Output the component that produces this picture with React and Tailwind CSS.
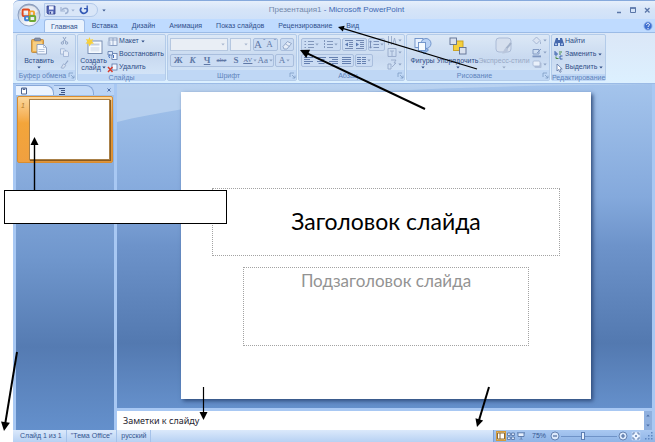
const TABS = ['Главная', 'Вставка', 'Дизайн', 'Анимация', 'Показ слайдов', 'Рецензирование', 'Вид'];

const Caret = ({ className = '' }) => (
  <svg viewBox="0 0 4 3" className={`w-1 h-[3px] shrink-0 ${className}`} fill="currentColor">
    <path d="M0.3 0.5h3.4L2 2.6z" />
  </svg>
);

const Launcher = () => (
  <svg viewBox="0 0 7 7" className="size-[7px]" fill="none" stroke="#7f9cc4" strokeWidth="0.8">
    <path d="M1 5V1h4M3 3l3 3M6 3.6V6H3.6" />
  </svg>
);

const OfficeLogo = () => (
  <svg viewBox="0 0 24 24" className="size-6">
    <defs>
      <radialGradient id="orb" cx="0.5" cy="0.85" r="0.9">
        <stop offset="0" stopColor="#ffffff" />
        <stop offset="0.55" stopColor="#d3dbe8" />
        <stop offset="1" stopColor="#8c9cb8" />
      </radialGradient>
    </defs>
    <circle cx="12" cy="12" r="11" fill="url(#orb)" stroke="#7d93b8" strokeWidth="0.8" />
    <path d="M3 9a9.5 9.5 0 0 1 18 0c-5 2-13 2-18 0z" fill="#fff" opacity="0.65" />
    <g fill="none" strokeWidth="1.9">
      <rect x="5.6" y="6.500" width="6.6" height="6.6" rx="1" stroke="#e2491d" />
      <rect x="12.6" y="8.400" width="4.4" height="4.4" rx="0.8" stroke="#f2a32c" />
      <rect x="8" y="13.600" width="4" height="3.6" rx="0.8" stroke="#3f7fd6" />
      <rect x="12.6" y="13" width="5.6" height="5" rx="0.8" stroke="#6eaa35" />
    </g>
  </svg>
);

const SaveIcon = () => (
  <svg viewBox="0 0 10 10" className="size-[10px]">
    <path d="M1 1h8v8H2L1 8z" fill="#5568b8" stroke="#33418c" strokeWidth="0.8" />
    <rect x="3" y="1.2" width="4.6" height="3.4" fill="#f3f6ff" />
    <rect x="3.2" y="6.2" width="4" height="2.6" fill="#c9d3f0" />
    <rect x="3.8" y="6.8" width="1.2" height="2" fill="#33418c" />
  </svg>
);

const UndoIcon = () => (
  <svg viewBox="0 0 10 10" className="size-[10px]" fill="none" stroke="#9fb2d2" strokeWidth="1.5">
    <path d="M2 5c2-3 6-2 6 .6C8 7.600 6.500 8.500 5 8.500" />
    <path d="M1 2v4h4" strokeWidth="1.2" />
  </svg>
);

const RedoIcon = () => (
  <svg viewBox="0 0 10 10" className="size-[10px]" fill="none" stroke="#3359b5" strokeWidth="1.7">
    <path d="M2.600 2.600a3.300 3.300 0 1 0 5 .6" />
    <path d="M5 3.600h3.200V.6" strokeWidth="1.300" />
  </svg>
);

const PasteIcon = () => (
  <svg viewBox="0 0 18 18" className="size-[18px]">
    <rect x="1.500" y="2.500" width="12" height="13" rx="1" fill="#edb04e" stroke="#b98232" strokeWidth="0.8" />
    <rect x="4.500" y="1" width="6" height="3" rx="1" fill="#8792a8" stroke="#5f6a80" strokeWidth="0.6" />
    <rect x="3" y="4.500" width="9" height="9.500" fill="#f6ce83" />
    <path d="M7 7.500h6.500l3 3v6.500H7z" fill="#f5f9ff" stroke="#7a8fb5" strokeWidth="0.8" />
    <path d="M13.500 7.500v3h3M8.500 12.500h6M8.500 14.500h6" fill="none" stroke="#9aadcc" strokeWidth="0.7" />
  </svg>
);

const CutIcon = () => (
  <svg viewBox="0 0 9 9" className="size-[9px]" fill="none" stroke="#8fa3c4" strokeWidth="1">
    <path d="M3 1l3 5M6 1L3 6" />
    <circle cx="2.400" cy="7" r="1.200" />
    <circle cx="6.600" cy="7" r="1.200" />
  </svg>
);

const CopyIcon = () => (
  <svg viewBox="0 0 9 9" className="size-[9px]" fill="#e3ebf8" stroke="#9bafd0" strokeWidth="0.8">
    <path d="M.5.8h3.700l1.300 1.300v4h-5z" />
    <path d="M3.500 3h3.700l1.300 1.300v4.200h-5z" />
  </svg>
);

const BrushIcon = () => (
  <svg viewBox="0 0 9 9" className="size-[9px]" fill="none" stroke="#93a7c9" strokeWidth="1.100">
    <path d="M8 .6L5 4.500" />
    <path d="M3.500 3.800l2.300 1.600L3.500 8.300 1 7.800z" fill="#d6e0f0" strokeWidth="0.8" />
  </svg>
);

const NewSlideIcon = () => (
  <svg viewBox="0 0 18 18" className="size-[18px]">
    <rect x="3" y="4" width="14" height="12.500" fill="#f7fbff" stroke="#6f86ad" strokeWidth="0.9" />
    <rect x="5.500" y="6.500" width="9" height="2" fill="#c5cfdf" />
    <rect x="5.500" y="10" width="9" height="4.500" fill="#dfe7f2" />
    <path d="M4.500 0l1 2.800L8.300 2 7 4.500l2 2-2.800.2L4.500 9.500 3.400 6.800.5 6.500l1.800-2L.8 2l2.700.6z" fill="#f7d03c" />
  </svg>
);

const LayoutIcon = () => (
  <svg viewBox="0 0 11 10" className="w-[11px] h-[10px]">
    <rect x="2" y="1" width="8" height="7.500" fill="#edf3fc" stroke="#7890b8" strokeWidth="0.8" />
    <path d="M6 1v7.500M2 3h8" stroke="#7890b8" strokeWidth="0.7" />
    <rect x="0.500" y="4.500" width="3" height="4" fill="#b4c4de" />
  </svg>
);

const ResetIcon = () => (
  <svg viewBox="0 0 11 10" className="w-[11px] h-[10px]">
    <rect x="5" y="3.500" width="5" height="6" fill="#f2f7ff" stroke="#5a76a8" strokeWidth="0.8" />
    <path d="M1 1.500h4.500v3.500H1z" fill="#dbe7fa" stroke="#5a76a8" strokeWidth="0.8" />
    <path d="M3 8c-1.500-1-1.500-2.500 0-3.500M6.500 5v3" fill="none" stroke="#2f5eb5" strokeWidth="0.9" />
  </svg>
);

const DeleteIcon = () => (
  <svg viewBox="0 0 11 10" className="w-[11px] h-[10px]">
    <rect x="5" y="1" width="5" height="6" fill="#f2f7ff" stroke="#5a76a8" strokeWidth="0.8" />
    <path d="M1 4l4.500 5M5.500 4L1 9" stroke="#d93a2b" strokeWidth="1.500" />
  </svg>
);

const ShapesIcon = () => (
  <svg viewBox="0 0 18 18" className="size-[18px]" stroke="#6a8fc7" strokeWidth="0.9">
    <rect x="1" y="1.500" width="8" height="9" fill="#e9f2ff" />
    <circle cx="12" cy="6.500" r="5" fill="#b9d2f5" />
    <path d="M10 9.500l4.500 3.500-4.500 4-4-4z" fill="#8fb5ea" />
    <rect x="4.500" y="5.500" width="7" height="8" fill="#f5faff" />
  </svg>
);

const ArrangeIcon = () => (
  <svg viewBox="0 0 18 18" className="size-[18px]" strokeWidth="0.9">
    <rect x="4.500" y="4" width="9.500" height="9.500" fill="#f4cf3d" stroke="#c99e1c" />
    <rect x="1" y="1" width="6.500" height="6.500" fill="#d9e1ee" stroke="#5d6f92" />
    <rect x="10.500" y="10.500" width="6.500" height="6.500" fill="#d9e1ee" stroke="#5d6f92" />
  </svg>
);

const StylesIcon = () => (
  <svg viewBox="0 0 18 18" className="size-[18px]">
    <rect x="1" y="1" width="15" height="14" rx="3" fill="#d5dfee" stroke="#abbbd6" />
    <path d="M16 6l-5 6" stroke="#a3b2ca" strokeWidth="2" />
    <path d="M12 11c-3 0-3 3-5 5.500 3 .5 6-1 6-4z" fill="#b9c6dc" />
  </svg>
);

const FillIcon = () => (
  <svg viewBox="0 0 10 10" className="size-[10px]" fill="#dbe4f2" stroke="#9fb1cf" strokeWidth="0.9">
    <path d="M4.500 1L8 4.500 4.500 8 1 4.500z" />
    <path d="M8.500 5.500v2.500" />
  </svg>
);

const OutlineIcon = () => (
  <svg viewBox="0 0 10 10" className="size-[10px]" fill="none" stroke="#7d95c0">
    <path d="M1 1.500h6V6H1zM9 1L5 5" strokeWidth="0.9" />
    <rect x="0.500" y="7.500" width="8.500" height="1.800" fill="#7d95c0" stroke="none" />
  </svg>
);

const EffectsIcon = () => (
  <svg viewBox="0 0 10 10" className="size-[10px]">
    <rect x="2.500" y="3.500" width="7" height="5.500" rx="1" fill="#afbfda" />
    <rect x="1" y="2" width="7" height="5" rx="1" fill="#e9f0fa" stroke="#a5b6d3" strokeWidth="0.8" />
  </svg>
);

const FindIcon = () => (
  <svg viewBox="0 0 10 10" className="size-[10px]" fill="#4568ad">
    <path d="M2 1h2v2h2V1h2l2 6v2H6V6H4v3H0V7z" />
    <circle cx="2" cy="7.300" r="1" fill="#b9cff2" />
    <circle cx="8" cy="7.300" r="1" fill="#b9cff2" />
  </svg>
);

const ReplaceIcon = () => (
  <svg viewBox="0 0 10 10" className="size-[10px]" fill="none" strokeWidth="1">
    <path d="M1 1v4M1 3h2v2H1" stroke="#3d63ad" />
    <path d="M5 2h3M5 4h2M2 6.500v2h2.500" stroke="#4d8f4a" />
    <path d="M8.500 6H6v3h2.500" stroke="#3d63ad" />
  </svg>
);

const SelectIcon = () => (
  <svg viewBox="0 0 10 10" className="size-[10px]">
    <path d="M3 1v7l1.700-1.500L6 9.300l1.200-.6L6 6h2.200z" fill="#fff" stroke="#5c74a3" strokeWidth="0.8" />
  </svg>
);

const EraserIcon = () => (
  <svg viewBox="0 0 11 10" className="w-[11px] h-[10px]">
    <path d="M1 6.500l4.500-5 4 2-4.500 5.500H2z" fill="#e6edf8" stroke="#8ba0c4" strokeWidth="0.9" />
    <path d="M3.500 4l4 2.500" stroke="#8ba0c4" strokeWidth="0.8" />
  </svg>
);

const ListIcon = ({ numbered }) => (
  <svg viewBox="0 0 10 9" className="w-[10px] h-[9px]" stroke="#8297bb">
    <path d="M4 1.500h6M4 4.500h6M4 7.500h6" />
    <path d={numbered ? 'M1.500 0v9' : 'M.5 1.500h1.500M.5 4.500h1.500M.5 7.500h1.500'} strokeDasharray={numbered ? '2 1' : undefined} />
  </svg>
);

const IndentIcon = ({ flip }) => (
  <svg viewBox="0 0 10 9" className="w-[10px] h-[9px]" stroke="#7389b2" fill="#5c7ab2">
    <path d="M1 .5h8M5 2.500h4M5 4.500h4M5 6.500h4M1 8.500h8" />
    <path d={flip ? 'M4 4.500l-3-2v4z' : 'M1 4.500l3-2v4z'} stroke="none" />
  </svg>
);

const ALIGN_PATHS = {
  left: 'M0 .5h9M0 2.500h6M0 4.500h9M0 6.500h6',
  center: 'M0 .5h9M1.500 2.500h6M0 4.500h9M1.500 6.500h6',
  right: 'M0 .5h9M3 2.500h6M0 4.500h9M3 6.500h6',
  justify: 'M0 .5h9M0 2.500h9M0 4.500h9M0 6.500h9',
  columns: 'M0 .5h4M5 .5h4M0 2.500h4M5 2.500h4M0 4.500h4M5 4.500h4M0 6.500h4M5 6.500h4',
};

const AlignIcon = ({ kind }) => (
  <svg viewBox="0 0 9 8" className="w-[9px] h-2" stroke="#6580b0">
    <path d={ALIGN_PATHS[kind]} />
  </svg>
);

const SpacingIcon = () => (
  <svg viewBox="0 0 10 9" className="w-[10px] h-[9px]" stroke="#7389b2" fill="none">
    <path d="M4.500 1.500H10M4.500 4.500H10M4.500 7.500H10M1.500 1v7M.3 2.300L1.500.8l1.200 1.500M.3 6.700l1.200 1.500 1.200-1.500" strokeWidth="0.9" />
  </svg>
);

const TextDirIcon = ({ kind }) => (
  <svg viewBox="0 0 10 11" className="w-[10px] h-[11px]" stroke="#96a9c9" strokeWidth="0.9" fill="none">
    {kind === 'dir' && <path d="M1.500 1v9M4.500 1v9M6 9l1.500-6L9 9" />}
    {kind === 'box' && <path d="M1 1.500h8v8H1zM3 4h4M5 4v5" />}
    {kind === 'art' && <path d="M1 5h3v5H1zM4 1h5l-2 3h2L5 8" />}
  </svg>
);

const Strip = ({ children, className = '' }) => (
  <div className={`flex items-center h-[13px] border border-[#a9bedd] rounded-[2px] bg-[#cbdcf3] text-[#5f78a6] ${className}`}>
    {children}
  </div>
);

const Group = ({ title, launcher, className, children }) => (
  <section className={`flex flex-col shrink-0 rounded-[2px] border border-[#b3cbe9] bg-linear-to-b from-[#dce8f6] via-[#c9daf0] to-[#d6e7fa] ${className}`}>
    <div className="flex-1 flex">{children}</div>
    <div className="h-[10px] flex items-center bg-[#bfd7f5] text-[#5d82bb] leading-none">
      <span className="flex-1 text-center whitespace-nowrap">{title}</span>
      {launcher && <button type="button" aria-label={title}><Launcher /></button>}
    </div>
  </section>
);

const BigButton = ({ icon, label, className = '', disabled }) => (
  <button
    type="button"
    disabled={disabled}
    className={`flex flex-col items-center pt-[2px] leading-[8px] whitespace-nowrap ${disabled ? 'text-[#98a9c5]' : 'text-[#2e4c86]'} ${className}`}
  >
    {icon}
    <span className="pt-[2px]">{label}</span>
    <Caret className="mt-px" />
  </button>
);

const RowButton = ({ icon, label, caret }) => (
  <button type="button" className="flex items-center gap-px h-[13px] whitespace-nowrap text-[#2e4c86]">
    {icon}
    {label}
    {caret && <Caret className="ml-px" />}
  </button>
);

const IconButton = ({ label, children, caret, className = '' }) => (
  <button type="button" aria-label={label} className={`flex-1 flex items-center justify-center gap-px leading-none ${className}`}>
    {children}
    {caret && <Caret className="text-[#8da1c3]" />}
  </button>
);

const TitleBar = () => (
  <header className="relative h-[19px] shrink-0 flex items-center bg-linear-to-b from-[#e6effb] via-[#d5e4f8] to-[#cfe1f9] rounded-tl-md border-t border-[#86a9dc]">
    <div className="ml-[31px] h-[14px] flex items-center gap-1 pl-px pr-2 rounded-r-full border border-[#b2c9ea] bg-[#d9e6f8]">
      <button type="button" aria-label="Сохранить"><SaveIcon /></button>
      <button type="button" aria-label="Отменить" className="flex items-center gap-px text-[#9fb2d2]"><UndoIcon /><Caret /></button>
      <button type="button" aria-label="Повторить"><RedoIcon /></button>
    </div>
    <button type="button" aria-label="Настройка панели" className="ml-1 text-[#3d5a91]"><Caret /></button>
    <h1 className="flex-1 text-center text-[8px] whitespace-nowrap text-[#3f69b3]">
      <span className="text-[#7489ab]">Презентация1</span> - Microsoft PowerPoint
    </h1>
    <div className="flex gap-[6px] mr-1 ml-12 text-[#5a76a8]">
      <button type="button" aria-label="Свернуть">
        <svg viewBox="0 0 8 8" className="size-2" stroke="currentColor"><path d="M2 6.500h4" strokeWidth="1.500" /></svg>
      </button>
      <button type="button" aria-label="Развернуть">
        <svg viewBox="0 0 8 8" className="size-2" stroke="currentColor" fill="none"><path d="M1.500 2h5v4.500h-5z" /><path d="M1 2h6" strokeWidth="1.500" /></svg>
      </button>
      <button type="button" aria-label="Закрыть">
        <svg viewBox="0 0 8 8" className="size-2" stroke="currentColor"><path d="M2 2l4.500 4.500M6.500 2L2 6.500" strokeWidth="1.300" /></svg>
      </button>
    </div>
    <button type="button" aria-label="Office" className="absolute left-1 top-[2px] z-10"><OfficeLogo /></button>
  </header>
);

const TabBar = () => (
  <nav className="h-[13px] shrink-0 flex items-stretch pl-[31px] pr-[2px] bg-[#bfdbff] text-[#2f4f8c]">
    {TABS.map((tab, i) => (
      <button
        key={tab}
        type="button"
        className={`px-[6px] leading-[13px] whitespace-nowrap rounded-t-[3px] ${i === 0 ? 'bg-[#e9f2fd] border-x border-t border-[#9dbce8]' : 'border-x border-transparent'}`}
      >
        {tab}
      </button>
    ))}
    <button type="button" aria-label="Справка" className="ml-auto">
      <svg viewBox="0 0 10 10" className="size-[10px]">
        <circle cx="5" cy="5" r="4.200" fill="#3e6fd0" stroke="#a8c4f0" />
        <path d="M3.500 3.800C3.500 2 6.600 2.200 6.500 3.800 6.400 4.800 5 4.800 5 6M5 7v1" stroke="#fff" fill="none" />
      </svg>
    </button>
  </nav>
);

const Ribbon = () => (
  <div className="h-[52px] shrink-0 flex gap-px p-px pl-[3px] pb-[2px] bg-linear-to-b from-[#dbe7f7] to-[#dcf0ff] border-y border-[#9bbbe6]">
    <Group title="Буфер обмена" launcher className="w-[60px]">
      <BigButton icon={<PasteIcon />} label="Вставить" className="w-9 ml-1" />
      <div className="flex flex-col justify-around pl-[3px]">
        <button type="button" aria-label="Вырезать"><CutIcon /></button>
        <button type="button" aria-label="Копировать"><CopyIcon /></button>
        <button type="button" aria-label="Формат по образцу"><BrushIcon /></button>
      </div>
    </Group>

    <Group title="Слайды" className="w-[89px]">
      <button type="button" className="w-[27px] ml-[2px] pt-[2px] flex flex-col items-center leading-[7px] whitespace-nowrap text-[#2e4c86]">
        <NewSlideIcon />
        <span className="pt-[2px]">Создать</span>
        <span className="flex items-center gap-px">слайд<Caret /></span>
      </button>
      <div className="flex flex-col justify-center">
        <RowButton icon={<LayoutIcon />} label="Макет" caret />
        <RowButton icon={<ResetIcon />} label="Восстановить" />
        <RowButton icon={<DeleteIcon />} label="Удалить" />
      </div>
    </Group>

    <Group title="Шрифт" launcher className="w-[130px]">
      <div className="flex-1 flex flex-col justify-evenly px-[2px]">
        <div className="flex gap-[2px]">
          <div className="relative w-[58px] text-[#a9b8d0]">
            <select aria-label="Шрифт" className="block appearance-none w-full h-[13px] bg-[#e9eef5] border border-[#b5c7e0]" />
            <Caret className="absolute right-[3px] top-[5px] pointer-events-none" />
          </div>
          <div className="relative w-[21px] text-[#a9b8d0]">
            <select aria-label="Размер шрифта" className="block appearance-none w-full h-[13px] bg-[#e9eef5] border border-[#b5c7e0]" />
            <Caret className="absolute right-[3px] top-[5px] pointer-events-none" />
          </div>
          <Strip className="w-[25px] font-['Liberation_Serif',serif]">
            <IconButton label="Увеличить размер" className="text-[11px]">A<sup className="text-[7px]">ˆ</sup></IconButton>
            <IconButton label="Уменьшить размер" className="text-[9px]">A<sup className="text-[7px]">ˇ</sup></IconButton>
          </Strip>
          <Strip className="flex-1"><IconButton label="Очистить формат"><EraserIcon /></IconButton></Strip>
        </div>
        <div className="flex gap-px font-['Liberation_Serif',serif]">
          <Strip className="w-[104px] text-[9px]">
            <IconButton label="Полужирный" className="font-bold">Ж</IconButton>
            <IconButton label="Курсив" className="font-bold italic">К</IconButton>
            <IconButton label="Подчеркнутый" className="font-bold underline">Ч</IconButton>
            <IconButton label="Зачеркнутый" className="line-through text-[7px]">abe</IconButton>
            <IconButton label="Тень" className="font-bold">S</IconButton>
            <IconButton label="Интервал" caret className="text-[7px] underline">AV</IconButton>
            <IconButton label="Регистр" caret>Aa</IconButton>
          </Strip>
          <Strip className="flex-1 text-[9px]"><IconButton label="Цвет текста" caret>A</IconButton></Strip>
        </div>
      </div>
    </Group>

    <Group title="Абзац" launcher className="w-[107px]">
      <div className="flex flex-col justify-evenly pl-[2px] w-[86px]">
        <div className="flex gap-px">
          <Strip className="w-10">
            <IconButton label="Маркеры" caret><ListIcon /></IconButton>
            <IconButton label="Нумерация" caret><ListIcon numbered /></IconButton>
          </Strip>
          <Strip className="w-[25px]">
            <IconButton label="Уменьшить отступ"><IndentIcon /></IconButton>
            <IconButton label="Увеличить отступ"><IndentIcon flip /></IconButton>
          </Strip>
          <Strip className="flex-1"><IconButton label="Междустрочный интервал" caret><SpacingIcon /></IconButton></Strip>
        </div>
        <div className="flex gap-px">
          <Strip className="w-[53px]">
            <IconButton label="По левому краю"><AlignIcon kind="left" /></IconButton>
            <IconButton label="По центру"><AlignIcon kind="center" /></IconButton>
            <IconButton label="По правому краю"><AlignIcon kind="right" /></IconButton>
            <IconButton label="По ширине"><AlignIcon kind="justify" /></IconButton>
          </Strip>
          <Strip className="w-[18px]"><IconButton label="Колонки" caret><AlignIcon kind="columns" /></IconButton></Strip>
        </div>
      </div>
      <div className="flex-1 flex flex-col justify-around">
        <IconButton label="Направление текста" caret><TextDirIcon kind="dir" /></IconButton>
        <IconButton label="Выровнять текст" caret><TextDirIcon kind="box" /></IconButton>
        <IconButton label="SmartArt" caret><TextDirIcon kind="art" /></IconButton>
      </div>
    </Group>

    <Group title="Рисование" launcher className="w-[144px]">
      <BigButton icon={<ShapesIcon />} label="Фигуры" className="w-[27px] ml-[2px]" />
      <BigButton icon={<ArrangeIcon />} label="Упорядочить" className="w-[43px]" />
      <BigButton icon={<StylesIcon />} label="Экспресс-стили" className="w-[50px]" disabled />
      <div className="flex-1 flex flex-col justify-around">
        <IconButton label="Заливка" caret><FillIcon /></IconButton>
        <IconButton label="Контур" caret><OutlineIcon /></IconButton>
        <IconButton label="Эффекты" caret><EffectsIcon /></IconButton>
      </div>
    </Group>

    <Group title="Редактирование" className="w-[55px]">
      <div className="flex flex-col justify-center pl-[2px]">
        <RowButton icon={<FindIcon />} label="Найти" />
        <RowButton icon={<ReplaceIcon />} label="Заменить" caret />
        <RowButton icon={<SelectIcon />} label="Выделить" caret />
      </div>
    </Group>
  </div>
);

const SlidesPane = () => (
  <aside className="w-[98px] shrink-0 flex flex-col bg-[linear-gradient(#a2c2ea,#84a8da_30%,#7097cd_50%,#557bb2_76%,#6490cc)]">
    <div className="h-[11px] shrink-0 flex items-end bg-[#b9d3f5]">
      <button type="button" aria-label="Слайды" className="w-[38px] h-[10px] pl-1 bg-[#eaf3ff] rounded-tr-lg border-t border-r border-[#88a8d8]">
        <svg viewBox="0 0 8 8" className="size-2" fill="#fff" stroke="#4d6491"><path d="M1.500 1h5v6h-5zM3 1v1.500h2V1" /></svg>
      </button>
      <button type="button" aria-label="Структура" className="w-10 h-[10px] pl-1 bg-[#c3daf7] rounded-tr-lg border-t border-r border-[#88a8d8]">
        <svg viewBox="0 0 8 8" className="size-2" stroke="#3c5587"><path d="M1 1.500h6M3 3.500h4M3 5.500h4M1 7.500h6" /></svg>
      </button>
      <button type="button" aria-label="Закрыть область" className="ml-auto mr-[2px] self-center">
        <svg viewBox="0 0 6 6" className="size-[6px]" stroke="#4d6ea8"><path d="M1.500 1.500l3 3M4.500 1.500l-3 3" /></svg>
      </button>
    </div>
    <div className="mt-px mx-px flex h-[67px] p-[2px] border border-[#d98d2f] rounded-[2px] bg-linear-to-b from-[#fbd79b] via-[#f3a53a] via-40% to-[#f0a040]">
      <span className="w-[9px] pl-px text-[7px] leading-[14px] italic text-[#b27a2c]">1</span>
      <div className="flex-1 bg-white border border-[#a98048] shadow-[1px_1px_1px_#8a5a1e]" />
    </div>
  </aside>
);

const Slide = () => (
  <article className="w-[77%] aspect-[4/3] mt-2 bg-white flex flex-col items-center shadow-[2px_2px_4px_#2f4c7c]">
    <div className="w-[85%] h-[22%] mt-24 border border-dotted border-[#a3a3a3] flex items-center justify-center">
      <h2 className="font-['Lato','Noto_Sans',sans-serif] text-[23px] leading-none text-black whitespace-nowrap">Заголовок слайда</h2>
    </div>
    <div className="w-[70%] h-[26%] mt-[11px] border border-dotted border-[#a3a3a3] text-center">
      <p className="font-['Lato','Noto_Sans',sans-serif] text-[17px] leading-[26px] text-[#939393] whitespace-nowrap">Подзаголовок слайда</p>
    </div>
  </article>
);

const Workspace = () => (
  <div className="flex-1 min-h-0 flex gap-[3px] px-[3px] bg-[#a8c8f3]">
    <SlidesPane />
    <main className="flex-1 min-w-0 flex flex-col gap-[3px]">
      <div className="relative flex-1 min-h-0 overflow-hidden bg-[linear-gradient(#a4c4ec,#84a9dc_35%,#6d93ca_50%,#5379b0_80%,#6590cb)]">
        <svg viewBox="0 0 534 40" preserveAspectRatio="none" className="absolute inset-x-0 top-0 w-full h-10" fill="#c2d8f2" opacity="0.7">
          <path d="M0 0h534C340 2 120 8 0 38z" />
        </svg>
        <div className="relative flex justify-center items-start pl-[3px]"><Slide /></div>
      </div>
      <div className="h-[19px] shrink-0 flex bg-white">
        <textarea
          aria-label="Заметки"
          defaultValue="Заметки к слайду"
          className="flex-1 block resize-none overflow-hidden px-[6px] font-['Noto_Sans',sans-serif] text-[9px] leading-[19px] text-[#1f2430] outline-none"
        />
        <div className="w-2 flex flex-col items-center justify-between py-[3px] bg-[#8fb0df] text-[#4c6fa8]">
          <Caret className="rotate-180" />
          <Caret />
        </div>
      </div>
    </main>
  </div>
);

const StatusBar = () => (
  <footer className="h-3 shrink-0 flex items-center bg-linear-to-b from-[#dbe9fb] to-[#b7d1f3] text-[#33558f] leading-[12px] whitespace-nowrap">
    <span className="pl-[7px] pr-1 border-r border-[#a5c2ea]">Слайд 1 из 1</span>
    <span className="px-1 border-r border-[#a5c2ea]">"Тема Office"</span>
    <span className="px-1 border-r border-[#a5c2ea]">русский</span>
    <div className="ml-auto self-stretch flex items-center pl-[2px] pr-[2px] bg-linear-to-b from-[#a9c8f1] to-[#8fb4e6] border-l border-[#7fa2d6]">
      <button type="button" aria-label="Обычный" className="bg-[#fbd27a] border border-[#d39a3c]">
        <svg viewBox="0 0 8 8" className="size-2" fill="#fff" stroke="#8a6a3a"><path d="M.5 1h7v6h-7zM3 1v6" /></svg>
      </button>
      <button type="button" aria-label="Сортировщик" className="px-px">
        <svg viewBox="0 0 8 8" className="size-2" fill="#e5effd" stroke="#4d6c9f" strokeWidth="0.8"><path d="M.5 1h2.800v2.500H.5zM4.600 1h2.800v2.500H4.600zM.5 5h2.800v2.500H.5zM4.600 5h2.800v2.500H4.600z" /></svg>
      </button>
      <button type="button" aria-label="Показ слайдов" className="px-px">
        <svg viewBox="0 0 8 8" className="size-2" fill="#e5effd" stroke="#4d6c9f" strokeWidth="0.8"><path d="M0 .8h8M1 1v3.500h6V1M4 4.500v2L2.500 7.800M4 6.500l1.500 1.300" /></svg>
      </button>
      <button type="button" className="ml-[6px]">75%</button>
      <button type="button" aria-label="Уменьшить" className="ml-1">
        <svg viewBox="0 0 10 10" className="size-[10px]" fill="#dce9fb" stroke="#4d6c9f" strokeWidth="0.8"><circle cx="5" cy="5" r="4" /><path d="M3 5h4" strokeWidth="1.200" /></svg>
      </button>
      <input
        type="range"
        aria-label="Масштаб"
        defaultValue={38}
        className="w-14 h-[10px] mx-px appearance-none bg-transparent bg-[linear-gradient(#6f93c8,#6f93c8)] bg-[length:100%_1px] bg-center bg-no-repeat [&::-webkit-slider-thumb]:appearance-none [&::-webkit-slider-thumb]:w-1 [&::-webkit-slider-thumb]:h-2 [&::-webkit-slider-thumb]:bg-[#e8f1fd] [&::-webkit-slider-thumb]:border [&::-webkit-slider-thumb]:border-[#5d7fb4]"
      />
      <button type="button" aria-label="Увеличить">
        <svg viewBox="0 0 10 10" className="size-[10px]" fill="#dce9fb" stroke="#4d6c9f" strokeWidth="0.8"><circle cx="5" cy="5" r="4" /><path d="M3 5h4M5 3v4" strokeWidth="1.200" /></svg>
      </button>
      <button type="button" aria-label="Вписать в окно" className="ml-[3px]">
        <svg viewBox="0 0 10 10" className="size-[10px]" fill="#eef5ff" stroke="#5474a8" strokeWidth="0.9"><path d="M1 1h8v8H1z" stroke="#b8d0f2" /><path d="M2 4V2h2M6 2h2v2M8 6v2H6M4 8H2V6M4 5h2M5 4v2" /></svg>
      </button>
      <svg viewBox="0 0 8 8" className="size-2 ml-1" fill="#5f86c0">
        <path d="M6 0h1.500v1.500H6zM6 3h1.500v1.500H6zM3 3h1.500v1.500H3zM6 6h1.500v1.500H6zM3 6h1.500v1.500H3zM0 6h1.500v1.500H0z" />
      </svg>
    </div>
  </footer>
);

const ARROWS = [
  { from: [477, 69], to: [338, 27], width: 1.2, head: 6 },
  { from: [425, 109], to: [300, 50], width: 2, head: 9 },
  { from: [34.5, 190], to: [34.5, 137], width: 1.4, head: 8 },
  { from: [17, 352], to: [4, 431], width: 2, head: 9 },
  { from: [203.5, 387], to: [203.5, 420], width: 1.2, head: 8 },
  { from: [489, 387], to: [477, 427], width: 2, head: 8 },
];

const Arrow = ({ from, to, width, head }) => {
  const len = Math.hypot(to[0] - from[0], to[1] - from[1]);
  const angle = (Math.atan2(to[1] - from[1], to[0] - from[0]) * 180) / Math.PI;
  return (
    <g transform={`translate(${from[0]} ${from[1]}) rotate(${angle})`}>
      <line x2={len - head + 1} stroke="#000" strokeWidth={width} />
      <polygon points={`${len},0 ${len - head},${-head / 2} ${len - head},${head / 2}`} />
    </g>
  );
};

// callout and pointers drawn on top of the window
const Annotations = () => (
  <div className="absolute inset-0 pointer-events-none">
    <svg width="655" height="442" className="absolute left-0 top-0">
      {ARROWS.map((a) => <Arrow key={a.to.join()} {...a} />)}
    </svg>
    <div className="absolute left-1 top-[190px] w-[223px] h-[34px] bg-white border border-black" />
  </div>
);

export default function App() {
  return (
    <div className="relative h-screen overflow-hidden bg-white pl-[13px] font-['Liberation_Sans','Noto_Sans',sans-serif] text-[7px]">
      <div className="h-full flex flex-col">
        <TitleBar />
        <TabBar />
        <Ribbon />
        <Workspace />
        <StatusBar />
      </div>
      <Annotations />
    </div>
  );
}
